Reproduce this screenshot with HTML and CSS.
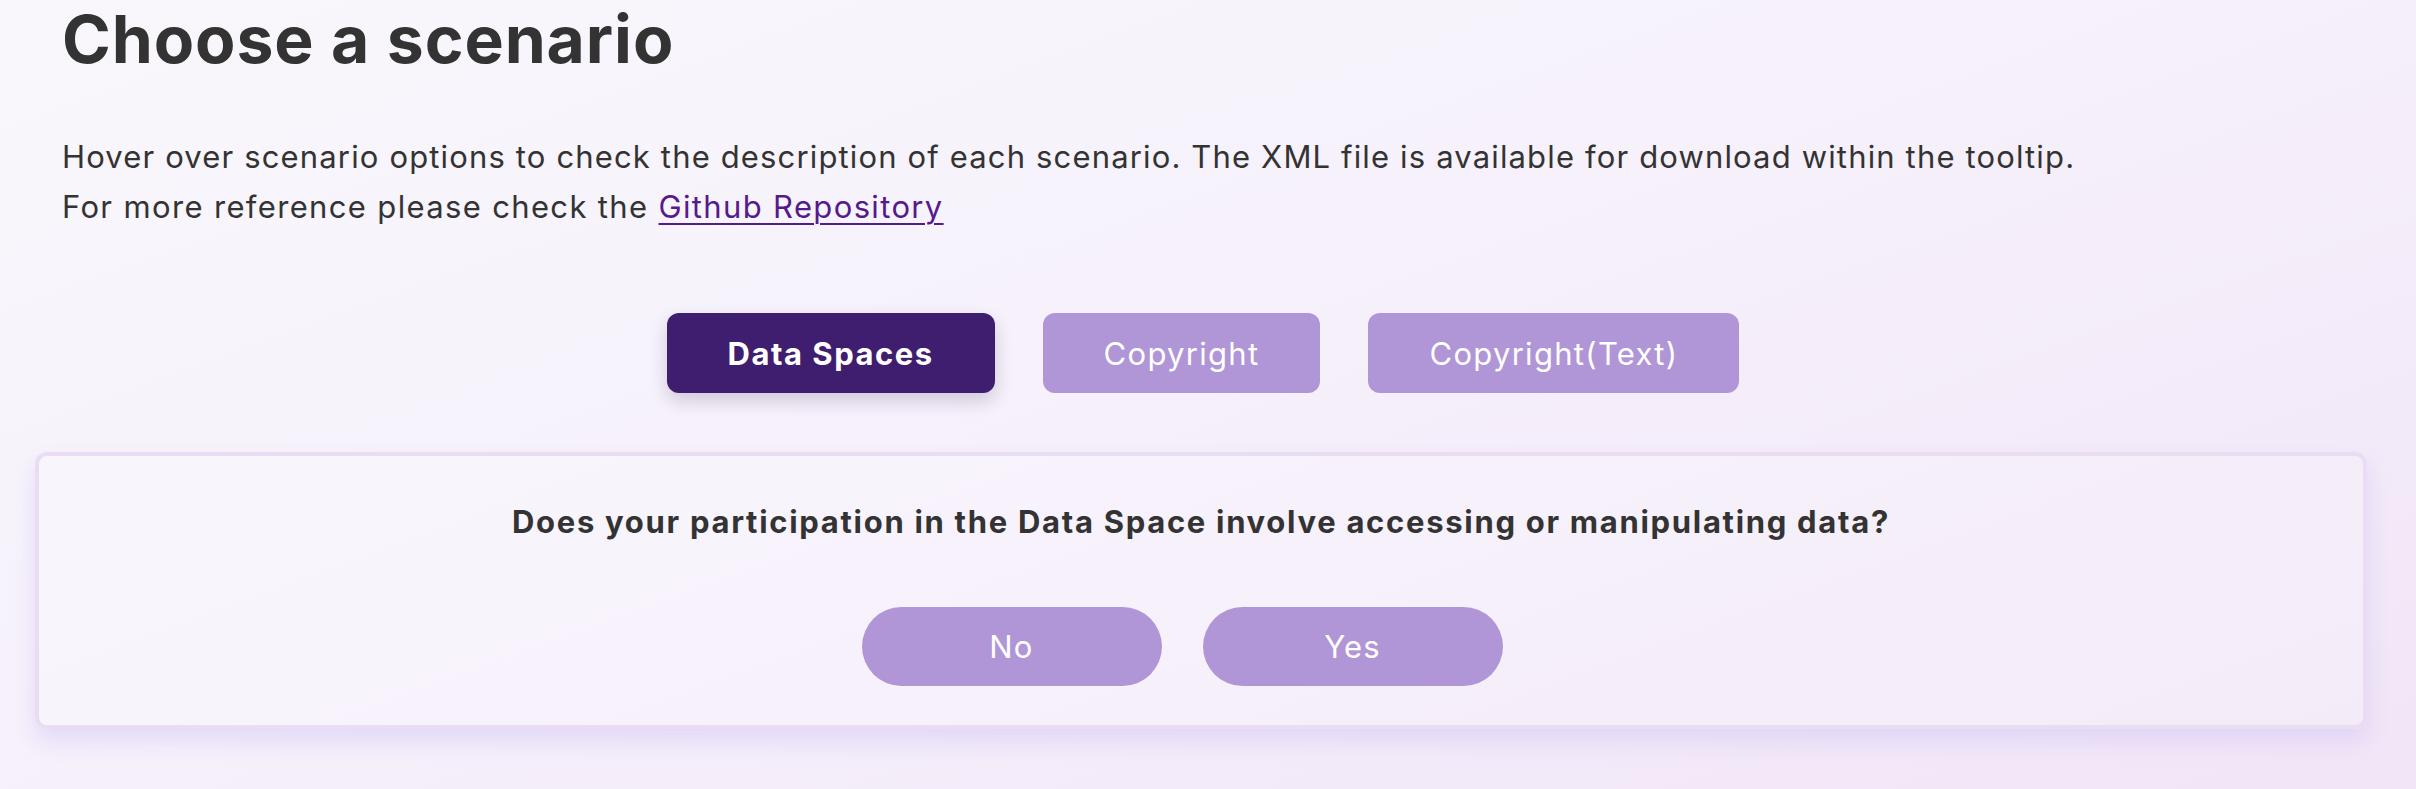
FILE: index.html
```html
<!DOCTYPE html>
<html lang="en">
<head>
<meta charset="utf-8">
<title>Choose a scenario</title>
<link rel="stylesheet" href="styles.css">
</head>
<body>
<main class="page">
  <section class="intro">
    <h1 class="title">Choose a scenario</h1>
    <p class="lead">Hover over scenario options to check the description of each scenario. The XML file is available for download within the tooltip.<br><span class="lead-second">For more reference please check the <a class="repo-link" href="#">Github Repository</a></span></p>
  </section>
  <nav class="scenarios">
    <button class="scenario scenario-active" type="button">Data Spaces</button>
    <button class="scenario" type="button">Copyright</button>
    <button class="scenario" type="button">Copyright(Text)</button>
  </nav>
  <section class="card">
    <h2 class="question">Does your participation in the Data Space involve accessing or manipulating data?</h2>
    <div class="answers">
      <button class="answer" type="button">No</button>
      <button class="answer" type="button">Yes</button>
    </div>
  </section>
</main>
</body>
</html>
```
FILE: styles.css
```css
html, body {
  margin: 0;
  padding: 0;
}
body {
  min-height: 789px;
  background: linear-gradient(160deg, #f9f7fc 0%, #f6f1fb 45%, #f1e5f7 100%);
  font-family: "Inter", "Open Sans", sans-serif;
  color: #333333;
}
.page {
  padding: 0 49px 0 35px;
  display: flex;
  flex-direction: column;
}
.intro {
  padding-left: 27px;
}
.title {
  margin: 0;
  font-size: 66px;
  font-weight: 700;
  line-height: 79px;
  letter-spacing: 0.9px;
  color: #333333;
}
.lead {
  margin: 53px 0 0;
  font-size: 31px;
  line-height: 50px;
  letter-spacing: 1.15px;
  font-weight: 400;
  color: #333333;
}
.lead-second {
  letter-spacing: 1.35px;
}
.repo-link {
  color: #551a8b;
  text-decoration: underline;
  text-decoration-thickness: 2px;
  text-underline-offset: 5px;
}
.scenarios {
  margin-top: 81px;
  padding-left: 4px;
  display: flex;
  justify-content: center;
  gap: 48px;
}
.scenario {
  height: 80px;
  padding: 0 61px;
  border: 0;
  border-radius: 12px;
  background: #b096d6;
  color: #ffffff;
  font-family: "Inter", "Open Sans", sans-serif;
  font-size: 31px;
  font-weight: 400;
  letter-spacing: 1.3px;
  display: flex;
  align-items: center;
  justify-content: center;
}
.scenario-active {
  background: #3f1e6f;
  font-weight: 700;
  letter-spacing: 1.5px;
  box-shadow: 0 8px 18px rgba(40, 20, 70, 0.18);
}
.card {
  margin-top: 59px;
  border: 4px solid #eadcf3;
  border-radius: 12px;
  background: rgba(255, 255, 255, 0.22);
  box-shadow: 0 12px 22px rgba(205, 190, 245, 0.45);
  padding: 47px 0 39px;
  display: flex;
  flex-direction: column;
  align-items: center;
}
.question {
  margin: 0;
  font-size: 31px;
  line-height: 37px;
  font-weight: 700;
  letter-spacing: 1.7px;
  color: #333333;
  text-align: center;
}
.answers {
  margin-top: 67px;
  padding-left: 3px;
  display: flex;
  justify-content: center;
}
.answer {
  width: 300px;
  height: 79px;
  margin-right: 41px;
  border: 0;
  border-radius: 40px;
  background: #b096d6;
  color: #ffffff;
  font-family: "Inter", "Open Sans", sans-serif;
  font-size: 31px;
  font-weight: 400;
  letter-spacing: 1.2px;
}
```
